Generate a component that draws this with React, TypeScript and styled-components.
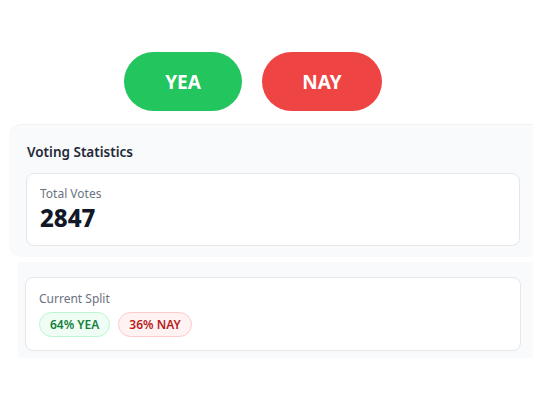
import React from "react";
import styled, { createGlobalStyle } from "styled-components";

const Global = createGlobalStyle`
  html, body { margin: 0; padding: 0; background: #ffffff; }
  body { font-family: "Noto Sans", "Open Sans", Arial, sans-serif; }
  * { box-sizing: border-box; }
`;

const Page = styled.div`
  padding-top: 52px;
  width: 550px;
`;

const ButtonRow = styled.div`
  display: flex;
  gap: 20px;
  margin-left: 124px;
`;

const VoteButton = styled.button<{ $tone: "yea" | "nay" }>`
  width: ${(p) => (p.$tone === "yea" ? 118 : 120)}px;
  height: 59px;
  border: none;
  border-radius: 30px;
  background: ${(p) => (p.$tone === "yea" ? "#22c55e" : "#ef4444")};
  color: #ffffff;
  font-family: "Noto Sans", sans-serif;
  font-weight: 700;
  font-size: 19px;
  display: flex;
  align-items: center;
  justify-content: center;
  padding: 0;
  cursor: pointer;
`;

const Panel = styled.section<{ $variant: "first" | "second" }>`
  background: #f9fafb;
  ${(p) =>
    p.$variant === "first"
      ? `
    margin: 13px 0 0 9px;
    width: 524px;
    border-radius: 12px 0 0 12px;
    border-top: 1px solid #f1f2f4;
    padding: 17px 13px 11px 17px;
  `
      : `
    margin: 5px 0 0 18px;
    width: 515px;
    padding: 15px 12px 7px 7px;
  `}
`;

const PanelTitle = styled.h2`
  margin: 0 0 11px 1px;
  font-size: 13.5px;
  line-height: 20px;
  font-weight: 600;
  color: #1f2937;
`;

const Card = styled.div<{ $compact?: boolean }>`
  background: #ffffff;
  border: 1px solid #e5e7eb;
  border-radius: 8px;
  padding: ${(p) => (p.$compact ? "12px 13px 11px" : "13px 13px 13px")};
`;

const Label = styled.div`
  font-size: 12px;
  line-height: 16px;
  color: #6b7280;
`;

const BigNumber = styled.div`
  font-size: 24px;
  line-height: 32px;
  font-weight: 800;
  color: #111827;
`;

const PillRow = styled.div`
  display: flex;
  gap: 8px;
  margin-top: 5px;
`;

const Pill = styled.span<{ $tone: "yea" | "nay" }>`
  display: inline-flex;
  align-items: center;
  height: 25px;
  padding: 0 10px;
  border-radius: 13px;
  font-size: 12px;
  font-weight: 600;
  background: ${(p) => (p.$tone === "yea" ? "#f0fdf4" : "#fef2f2")};
  border: 1px solid ${(p) => (p.$tone === "yea" ? "#bbf7d0" : "#fecaca")};
  color: ${(p) => (p.$tone === "yea" ? "#15803d" : "#b91c1c")};
`;

export default function App() {
  return (
    <>
      <Global />
      <Page>
        <ButtonRow>
          <VoteButton $tone="yea">YEA</VoteButton>
          <VoteButton $tone="nay">NAY</VoteButton>
        </ButtonRow>
        <Panel $variant="first">
          <PanelTitle>Voting Statistics</PanelTitle>
          <Card $compact>
            <Label>Total Votes</Label>
            <BigNumber>2847</BigNumber>
          </Card>
        </Panel>
        <Panel $variant="second">
          <Card>
            <Label>Current Split</Label>
            <PillRow>
              <Pill $tone="yea">64% YEA</Pill>
              <Pill $tone="nay">36% NAY</Pill>
            </PillRow>
          </Card>
        </Panel>
      </Page>
    </>
  );
}
